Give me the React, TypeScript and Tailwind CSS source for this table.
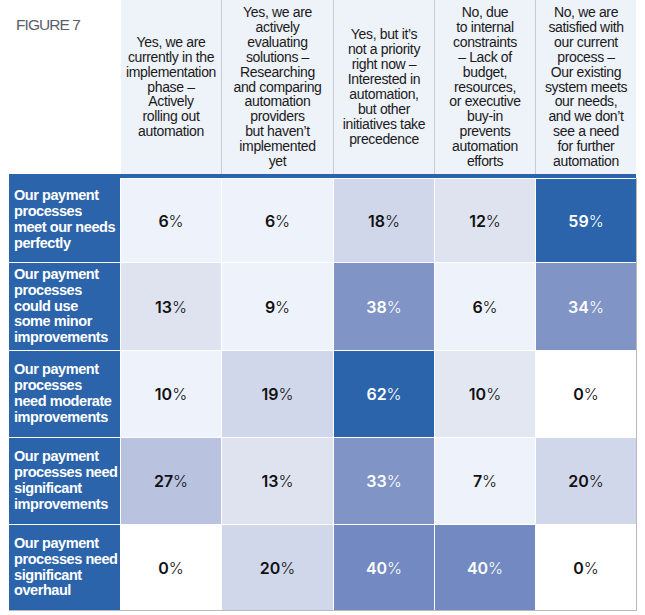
const headers = [
  ['Yes, we are', 'currently in the', 'implementation', 'phase –', 'Actively', 'rolling out', 'automation'],
  ['Yes, we are', 'actively', 'evaluating', 'solutions –', 'Researching', 'and comparing', 'automation', 'providers', 'but haven’t', 'implemented', 'yet'],
  ['Yes, but it’s', 'not a priority', 'right now –', 'Interested in', 'automation,', 'but other', 'initiatives take', 'precedence'],
  ['No, due', 'to internal', 'constraints', '– Lack of', 'budget,', 'resources,', 'or executive', 'buy-in', 'prevents', 'automation', 'efforts'],
  ['No, we are', 'satisfied with', 'our current', 'process –', 'Our existing', 'system meets', 'our needs,', 'and we don’t', 'see a need', 'for further', 'automation'],
];

// cell shades, lightest to darkest
const c0 = 'bg-white text-[#111]';
const c1 = 'bg-[#eef2fa] text-[#111]';
const c2 = 'bg-[#dfe3f0] text-[#111]';
const c2b = 'bg-[#e3e7f2] text-[#111]';
const c3 = 'bg-[#d1d7ea] text-[#111]';
const c4 = 'bg-[#b9c3e0] text-[#111]';
const c5 = 'bg-[#8094c5] text-white';
const c6 = 'bg-[#7289c1] text-white';
const c7 = 'bg-[#2c64ab] text-white';

const rows = [
  {
    label: ['Our payment', 'processes', 'meet our needs', 'perfectly'],
    height: 'h-[84px]',
    cells: [
      { v: 6, c: c1 },
      { v: 6, c: c1 },
      { v: 18, c: c3 },
      { v: 12, c: c2 },
      { v: 59, c: c7 },
    ],
  },
  {
    label: ['Our payment', 'processes', 'could use', 'some minor', 'improvements'],
    height: 'h-[87px]',
    cells: [
      { v: 13, c: c2 },
      { v: 9, c: c1 },
      { v: 38, c: c5 },
      { v: 6, c: c1 },
      { v: 34, c: c5 },
    ],
  },
  {
    label: ['Our payment', 'processes', 'need moderate', 'improvements'],
    height: 'h-[86px]',
    cells: [
      { v: 10, c: c1 },
      { v: 19, c: c3 },
      { v: 62, c: c7 },
      { v: 10, c: c2b },
      { v: 0, c: c0 },
    ],
  },
  {
    label: ['Our payment', 'processes need', 'significant', 'improvements'],
    height: 'h-[86px]',
    cells: [
      { v: 27, c: c4 },
      { v: 13, c: c2 },
      { v: 33, c: c5 },
      { v: 7, c: c1 },
      { v: 20, c: c3 },
    ],
  },
  {
    label: ['Our payment', 'processes need', 'significant', 'overhaul'],
    height: 'h-[86px]',
    cells: [
      { v: 0, c: c0 },
      { v: 20, c: c3 },
      { v: 40, c: c6 },
      { v: 40, c: c6 },
      { v: 0, c: c0 },
    ],
  },
];

const Lines = ({ lines }: { lines: string[] }) => (
  <>
    {lines.map((l, i) => (
      <span key={i} className="block whitespace-nowrap">
        {l}
      </span>
    ))}
  </>
);

export default function App() {
  return (
    <div
      className="w-[645px] h-[615px] bg-white overflow-hidden"
      style={{ fontFamily: '"Liberation Sans", Arial, sans-serif' }}
    >
      <div className="ml-[9px] w-[627px]">
        {/* Header */}
        <div className="grid grid-cols-[112px_100px_112px_101px_101px_101px] h-[174px]">
          <div className="pt-[17px] pl-[7px]">
            <span className="block text-[15.5px] leading-[15.5px] tracking-[-0.06em] text-[#5b5d6a]">FIGURE 7</span>
          </div>
          {headers.map((h, i) => (
            <div
              key={i}
              className={`flex items-center justify-center text-center bg-[#eef2f9] text-[#1a1a1a] text-[14px] leading-[14.9px] tracking-[-0.025em] ${
                i === 0 ? '' : 'border-l border-[#c8cbd0]'
              }`}
            >
              <div>
                <Lines lines={h} />
              </div>
            </div>
          ))}
        </div>

        {/* Bar */}
        <div className="h-[4px] w-[627px] bg-[#2c64ab]" />

        {/* Body */}
        <div className="flex flex-col gap-px w-[628px] border-r border-[#b8babe]">
          {rows.map((r, ri) => (
            <div
              key={ri}
              className={`grid grid-cols-[111px_100px_111px_100px_100px_100px] gap-px ${r.height} ${
                ri === 0 ? 'pt-px' : ''
              } ${ri === rows.length - 1 ? 'border-b border-[#b8babe]' : ''}`}
            >
              <div
                className={`flex items-center bg-[#2c64ab] text-white font-bold text-[14.5px] leading-[15.8px] tracking-[-0.03em] pl-[5px] ${
                  ri === 0 ? '-mt-px' : ''
                }`}
              >
                <div>
                  <Lines lines={r.label} />
                </div>
              </div>
              {r.cells.map((c, ci) => (
                <div
                  key={ci}
                  className={`flex items-center justify-center text-[16px] ${c.c}`}
                  style={{ fontFamily: 'Inter, "Liberation Sans", sans-serif' }}
                >
                  <span className="font-semibold">{c.v}</span>
                  <span className="font-light">%</span>
                </div>
              ))}
            </div>
          ))}
        </div>
      </div>
    </div>
  );
}
